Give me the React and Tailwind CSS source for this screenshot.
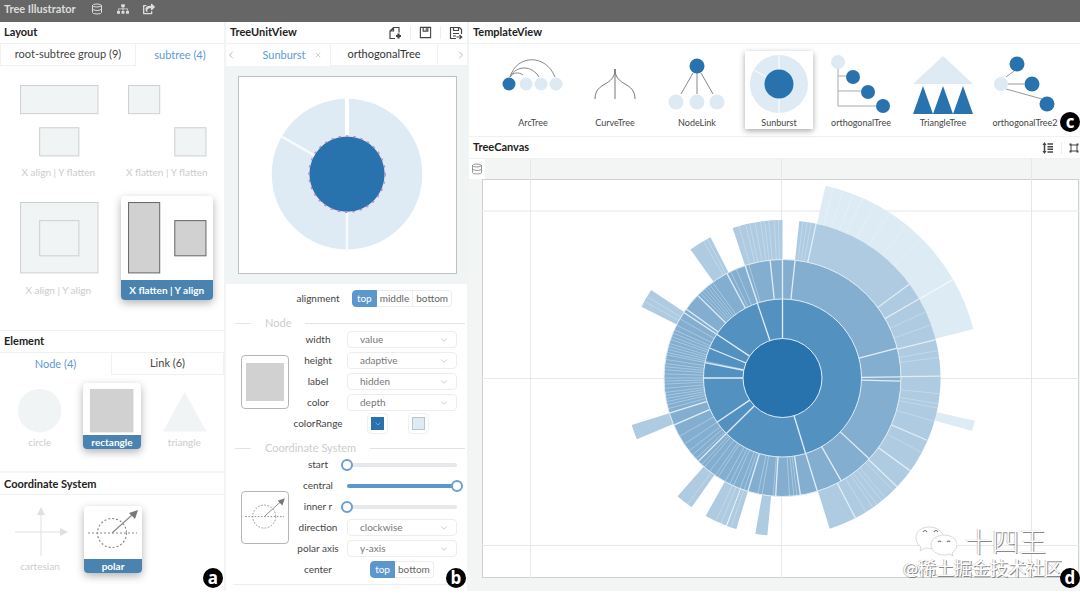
import { ChevronDown, ChevronLeft, ChevronRight, Database, X } from 'lucide-react';
import { FaShareSquare, FaSitemap } from 'react-icons/fa';

const polar = (cx, cy, r, deg) => {
  const a = ((deg - 90) * Math.PI) / 180;
  return `${(cx + r * Math.cos(a)).toFixed(2)} ${(cy + r * Math.sin(a)).toFixed(2)}`;
};

const slice = (cx, cy, r0, r1, from, to) => {
  const large = to - from > 180 ? 1 : 0;
  return `M${polar(cx, cy, r1, from)}A${r1} ${r1} 0 ${large} 1 ${polar(cx, cy, r1, to)}L${polar(cx, cy, r0, to)}A${r0} ${r0} 0 ${large} 0 ${polar(cx, cy, r0, from)}Z`;
};

// every ring holds blocks of [start, end, inner separators, thin separators]
const rings = [
  {
    r0: 39.5,
    r1: 79,
    fill: '#5391c0',
    blocks: [[0, 360, [0, 163, 225.3, 236, 270, 281.3, 292.3, 303.6, 341.4], [282.3]]],
  },
  {
    r0: 79,
    r1: 118.5,
    fill: '#83aed0',
    blocks: [
      [
        0,
        360,
        [0, 6.1, 75.4, 89.5, 91.5, 133, 150.3, 162.9, 171.3, 183.3, 197, 225.3, 246.6, 252.8, 303.6, 305.6, 314.2, 332, 341.6, 354],
        [
          173, 174.5, 176.6, 184.5, 190, 192, 199, 201, 204.5, 206.5, 209, 213, 214.6, 218, 221.3, 223, 227, 229.5,
          232, 236, 240.5, 255, 257, 258.5, 260, 261.5, 263, 265, 267, 268.5, 270, 272, 274, 275.5, 277, 279, 281.3,
          282.5, 284, 285.5, 287, 289, 290.5, 292.3, 294, 296.5, 300, 316, 317.5, 319, 320.5, 322, 323.8, 334, 337, 343.5,
        ],
      ],
    ],
  },
  {
    r0: 118.5,
    r1: 158,
    fill: '#aecbe1',
    blocks: [
      [6.1, 162.6, [12.3, 53.5, 59.9, 75.9, 89.3, 113.3, 126, 133.5, 152.5], [7.5, 9, 10.5, 65.2, 70.3, 80, 82.5, 95.7, 99.4, 101, 105.9, 118.2, 135.5, 139.3, 141, 143.3, 145, 148]],
      [185.5, 189.9, [], []],
      [197, 200.6, [], [199]],
      [200.9, 209.1, [], [203, 205]],
      [215.1, 221.6, [], [217]],
      [247.2, 252.7, [], []],
      [296.8, 303.8, [], [299, 301]],
      [324.4, 332.9, [], [330, 331.5]],
      [341.6, 360, [], [344, 346.5, 348, 350, 352, 353.5, 355, 357, 358.5]],
    ],
  },
  {
    r0: 158,
    r1: 197,
    fill: '#ddebf4',
    blocks: [
      [12.6, 75.6, [60], [15, 18, 21, 24, 28, 33, 39, 45]],
      [102.5, 105.6, [], []],
    ],
  },
];

function TreeSunburst({ cx, cy }) {
  return (
    <g>
      {[...rings].reverse().map((ring) =>
        ring.blocks.map(([from, to, lines, thin]) => (
          <g key={`${ring.r0}-${from}`} stroke={ring.r1 > 158 ? '#f4f9fc' : '#e1edf5'}>
            {to - from === 360 ? (
              <circle cx={cx} cy={cy} r={ring.r1} fill={ring.fill} />
            ) : (
              <path d={slice(cx, cy, ring.r0, ring.r1, from, to)} fill={ring.fill} stroke="none" />
            )}
            {thin.map((a) => (
              <path key={a} d={`M${polar(cx, cy, ring.r0, a)}L${polar(cx, cy, ring.r1, a)}`} strokeWidth="0.6" opacity="0.7" />
            ))}
            {lines.map((a) => (
              <path key={a} d={`M${polar(cx, cy, ring.r0, a)}L${polar(cx, cy, ring.r1, a)}`} strokeWidth="1.3" />
            ))}
          </g>
        ))
      )}
      <circle cx={cx} cy={cy} r="39.5" fill="#2873ae" stroke="#e1edf5" />
    </g>
  );
}

function PolarGlyph() {
  return (
    <g fill="none" stroke="#8a8a8a" strokeWidth="1.2">
      <circle cx="28" cy="27" r="14.5" strokeDasharray="2 2" />
      <path d="M4 27h49" strokeDasharray="2 2" />
      <path d="M28 27L48 9" />
      <path d="M54 4l-3 9-6-6z" fill="#777" stroke="none" />
    </g>
  );
}

const layouts = [
  { id: 'X align | Y flatten', rects: [[8, 6, 77, 28], [27, 48, 39, 28]] },
  { id: 'X flatten | Y flatten', rects: [[7, 6, 31, 28], [53, 48, 31, 28]] },
  { id: 'X align | Y align', rects: [[8, 6, 77, 70], [27, 24, 39, 35]] },
  { id: 'X flatten | Y align', rects: [[7, 6, 31, 70], [53, 24, 31, 35]], active: true },
];

const nodes = [
  { id: 'circle', shape: <circle cx="29" cy="28" r="22" fill="#f1f4f4" /> },
  { id: 'rectangle', shape: <rect x="7" y="6" width="44" height="44" fill="#d1d1d1" />, active: true },
  { id: 'triangle', shape: <path d="M29 9l22 40H7z" fill="#f1f4f4" /> },
];

const systems = [
  {
    id: 'cartesian',
    shape: (
      <g fill="#dfe1e1" stroke="#dfe1e1">
        <path d="M4 26h46M30 50V8" />
        <path d="M30 1l4 8h-8zM57 26l-8-4v8z" stroke="none" />
      </g>
    ),
  },
  { id: 'polar', shape: <PolarGlyph />, active: true },
];

const templates = [
  {
    id: 'ArcTree',
    shape: (
      <>
        <path d="M11 26C18 3 47 3 56 26M11 26c6-12 22-12 29 0M11 26c3-5 9-5 13-2" fill="none" stroke="#888" />
        <circle cx="10" cy="33" r="6.5" fill="#2873ae" />
        {[27, 42, 57].map((x) => <circle key={x} cx={x} cy="33" r="6.5" fill="#dde9f3" />)}
      </>
    ),
  },
  {
    id: 'CurveTree',
    shape: <path d="M34 18v30M34 18C34 36 14 30 14 48M34 18C34 36 54 30 54 48" fill="none" stroke="#777" />,
  },
  {
    id: 'NodeLink',
    shape: (
      <>
        <path d="M30 22L18 43M34 22v21M38 22l12 21" stroke="#888" />
        <circle cx="34" cy="15" r="7.5" fill="#2873ae" />
        {[13, 34, 54].map((x) => <circle key={x} cx={x} cy="51" r="7.5" fill="#dde9f3" />)}
      </>
    ),
  },
  {
    id: 'Sunburst',
    active: true,
    shape: (
      <>
        <circle cx="34" cy="33" r="29" fill="#deebf4" />
        <path d="M34 4v58M9 19l16 9" stroke="#fff" />
        <circle cx="34" cy="33" r="14.5" fill="#2873ae" />
      </>
    ),
  },
  {
    id: 'orthogonalTree',
    shape: (
      <>
        <path d="M11 11v44h38M11 40h24M11 25h9" fill="none" stroke="#aaa" />
        <circle cx="11" cy="11" r="7" fill="#dde9f3" />
        <circle cx="26" cy="26" r="7" fill="#2873ae" />
        <circle cx="41" cy="41" r="7" fill="#2873ae" />
        <circle cx="56" cy="55" r="7" fill="#2873ae" />
      </>
    ),
  },
  {
    id: 'TriangleTree',
    shape: (
      <>
        <path d="M34 5l30 28H4z" fill="#deebf4" />
        <path d="M14 35l10 28H4zM34 35l10 28H24zM54 35l10 28H44z" fill="#2873ae" />
      </>
    ),
  },
  {
    id: 'orthogonalTree2',
    shape: (
      <>
        <path d="M15 26l8-6M17 33h16M15 38l36 10" stroke="#999" />
        <circle cx="10" cy="33" r="7" fill="#dde9f3" />
        <circle cx="26" cy="13" r="7.5" fill="#2873ae" />
        <circle cx="41" cy="33" r="7.5" fill="#2873ae" />
        <circle cx="56" cy="53" r="7.5" fill="#2873ae" />
      </>
    ),
  },
];

function Heading({ children, extra }) {
  return (
    <div className="flex h-[22px] items-center justify-between border-b border-[#f0f1f1] pl-1">
      <h2 className="text-[11px] font-bold text-[#222]">{children}</h2>
      {extra}
    </div>
  );
}

function Tabs({ items, active }) {
  return (
    <div className="flex h-[22px] text-[11px]">
      {items.map((item) => (
        <button
          key={item.name}
          className={
            item.name === active
              ? `${item.width} text-[#5c9ad4]`
              : `${item.width} border border-t-0 border-[#f0f1f1] text-[#444]`
          }
        >
          {item.name}
        </button>
      ))}
    </div>
  );
}

function ThumbCard({ item }) {
  return (
    <button
      className={
        item.active
          ? 'w-[58px] overflow-hidden rounded-sm bg-white shadow-[0_3px_8px_rgba(0,0,0,0.3)]'
          : 'w-[58px]'
      }
    >
      <svg viewBox="0 0 58 53" className="block w-full">
        {item.shape}
      </svg>
      <span
        className={
          item.active
            ? 'block bg-[#4a83b0] text-[10px] leading-[14px] font-bold text-white'
            : 'block text-[10px] leading-[14px] text-[#ccc]'
        }
      >
        {item.id}
      </span>
    </button>
  );
}

function Badge({ children, place }) {
  return (
    <span
      className={`absolute ${place} flex size-5 items-center justify-center rounded-full bg-black pb-px font-['Open_Sans',sans-serif] text-[17px] leading-5 font-bold text-white`}
    >
      {children}
    </span>
  );
}

function LayoutPanel() {
  return (
    <aside className="relative min-w-0 border-r-2 border-[#f1f4f4]">
      <Heading>Layout</Heading>
      <Tabs
        active="subtree (4)"
        items={[
          { name: 'root-subtree group (9)', width: 'w-[136px]' },
          { name: 'subtree (4)', width: 'flex-1' },
        ]}
      />
      <div className="grid grid-cols-2 gap-x-4 gap-y-[14px] pt-[13px] pr-[11px] pb-[30px] pl-3">
        {layouts.map((item) => (
          <button
            key={item.id}
            className={item.active ? 'overflow-hidden rounded-sm shadow-[0_3px_8px_rgba(0,0,0,0.3)]' : ''}
          >
            <svg viewBox="0 0 92 83" className="block w-full">
              {item.rects.map(([x, y, w, h]) => (
                <rect
                  key={y}
                  x={x + 0.5}
                  y={y + 0.5}
                  width={w}
                  height={h}
                  fill={item.active ? '#d1d1d1' : '#f1f4f4'}
                  stroke={item.active ? '#666' : '#cdd0d0'}
                />
              ))}
            </svg>
            <span
              className={
                item.active
                  ? 'block bg-[#4a83b0] text-[10px] leading-5 font-bold whitespace-nowrap text-white'
                  : 'block text-[10px] leading-5 whitespace-nowrap text-[#ccc]'
              }
            >
              {item.id}
            </span>
          </button>
        ))}
      </div>
      <div className="border-t border-[#f0f1f1]">
        <Heading>Element</Heading>
      </div>
      <Tabs
        active="Node (4)"
        items={[
          { name: 'Node (4)', width: 'w-[111px]' },
          { name: 'Link (6)', width: 'flex-1' },
        ]}
      />
      <div className="flex gap-[15px] px-[11px] pt-2 pb-[22px]">
        {nodes.map((item) => <ThumbCard key={item.id} item={item} />)}
      </div>
      <div className="border-t-2 border-[#f4f5f5]">
        <Heading>Coordinate System</Heading>
      </div>
      <div className="flex gap-[15px] px-[11px] pt-[11px]">
        {systems.map((item) => <ThumbCard key={item.id} item={item} />)}
      </div>
      <Badge place="right-px bottom-[3px]">a</Badge>
    </aside>
  );
}

function Row({ label, id, children }) {
  return (
    <div className="flex h-[17px] items-center">
      <label htmlFor={id} className="w-[58px] text-center text-[10px] text-[#444]">
        {label}
      </label>
      <div className="min-w-0 flex-1">{children}</div>
    </div>
  );
}

function SelectRow({ label, value }) {
  const id = label.replace(' ', '-');
  return (
    <Row label={label} id={id}>
      <div className="relative">
        <select
          id={id}
          defaultValue={value}
          className="block h-[17px] w-full appearance-none rounded-sm border border-[#eceded] bg-white pl-3 text-[10px] leading-[15px] text-[#777]"
        >
          <option>{value}</option>
        </select>
        <ChevronDown className="pointer-events-none absolute top-1 right-2 size-2.5 text-[#c4c4c4]" />
      </div>
    </Row>
  );
}

function SliderRow({ label, value }) {
  const id = label.replace(' ', '-');
  return (
    <Row label={label} id={id}>
      <div className={value ? 'flex h-1 items-center rounded-full bg-[#5b97cd]' : 'flex h-1 items-center rounded-full bg-[#e6e8eb]'}>
        <input
          id={id}
          type="range"
          defaultValue={value}
          className="-mx-1.5 h-3 min-w-0 flex-1 appearance-none bg-transparent [&::-webkit-slider-thumb]:size-3 [&::-webkit-slider-thumb]:appearance-none [&::-webkit-slider-thumb]:rounded-full [&::-webkit-slider-thumb]:border-2 [&::-webkit-slider-thumb]:border-[#6a9fd2] [&::-webkit-slider-thumb]:bg-white"
        />
      </div>
    </Row>
  );
}

function Segmented({ items }) {
  return (
    <div className="flex justify-center text-[10px] leading-[15px]">
      {items.map((item, i) => (
        <button
          key={item}
          className={
            i === 0
              ? 'rounded-l-sm border border-[#5b97cd] bg-[#5b97cd] px-1 text-white'
              : 'border border-l-0 border-[#eceded] px-[3px] text-[#666] last:rounded-r-sm'
          }
        >
          {item}
        </button>
      ))}
    </div>
  );
}

function Legend({ children }) {
  return (
    <div className="mt-2 flex h-4 items-center text-[11px] text-[#ccc]">
      <span className="-ml-1.5 h-px w-4 bg-[#e2e2e2]" />
      <h3 className="mx-[14px]">{children}</h3>
      <span className="-mr-2 h-px flex-1 bg-[#e2e2e2]" />
    </div>
  );
}

function UnitPanel() {
  return (
    <section className="relative min-w-0 border-r-2 border-[#f1f4f4]">
      <Heading
        extra={
          <div className="flex items-center divide-x divide-[#eee] pr-1 text-[#444]">
            <button aria-label="New unit" className="px-2">
              <svg viewBox="0 0 14 14" className="size-[14px]" fill="none" stroke="currentColor" strokeWidth="1.2">
                <path d="M7 12.500H2V5l3.500-3.500H11v5M5.500 1.500V5H2" />
                <path d="M10.500 7.500v5M8 10h5" strokeWidth="2.2" />
              </svg>
            </button>
            <button aria-label="Save" className="px-2">
              <svg viewBox="0 0 14 14" className="size-[13px]" fill="none" stroke="currentColor" strokeWidth="1.2">
                <path d="M1.500 1.500h11v11h-11zM4.500 1.500v4h5v-4M7.800 2.500v2" />
              </svg>
            </button>
            <button aria-label="Save as" className="pl-2">
              <svg viewBox="0 0 14 14" className="size-[14px]" fill="none" stroke="currentColor" strokeWidth="1.2">
                <path d="M7 12.500H1.500v-11h9l2 2V8M4.500 1.500v3h5v-3M4 7.500h6M4 10h3M7.500 11h5M10.500 9l2.200 2-2.200 2" />
              </svg>
            </button>
          </div>
        }
      >
        TreeUnitView
      </Heading>
      <div className="flex h-[22px] items-center text-[11px]">
        <button aria-label="Previous tab" className="w-3 text-[#bbb]">
          <ChevronLeft className="-ml-px size-3" />
        </button>
        <button className="flex h-full flex-1 items-center justify-center gap-2 border-r border-[#f0f1f1] pl-4 text-[#5c9ad4]">
          Sunburst
          <X className="size-2 text-[#bbb]" />
        </button>
        <button className="h-full w-[107px] border-r border-b border-[#f0f1f1] text-[#333]">orthogonalTree</button>
        <button aria-label="Next tab" className="flex h-full w-[29px] items-center justify-end border-b border-[#f0f1f1] text-[#bbb]">
          <ChevronRight className="size-3" />
        </button>
      </div>

      <div className="bg-[#f1f4f4] py-2.5 pr-[10px] pl-3">
        <svg viewBox="0 0 219 198" className="block w-full border border-[#bfc1c1] bg-white">
          <circle cx="109" cy="98" r="76" fill="#deebf4" />
          <path d="M109 98V20" stroke="#fff" strokeWidth="4" />
          <path d="M109 98v78" stroke="#f8fbfd" strokeWidth="2.5" />
          <path d="M109 98L43 60" stroke="#f8fbfd" strokeWidth="2.5" />
          <circle cx="109" cy="98" r="38" fill="#2873ae" />
          <circle cx="109" cy="98" r="38.5" fill="none" stroke="#c78bc8" strokeWidth="1.5" strokeDasharray="2.5 5" />
        </svg>
      </div>

      <div className="pt-1.5 pr-[10px] pl-[15px]">
        <div className="pl-12">
          <Row label="alignment">
            <Segmented items={['top', 'middle', 'bottom']} />
          </Row>
        </div>
        <Legend>Node</Legend>
        <div className="flex items-center">
          <div className="w-12 rounded border border-[#b5b5b5] px-1 py-[7px]">
            <div className="h-[38px] bg-[#d1d1d1]" />
          </div>
          <div className="flex min-w-0 flex-1 flex-col gap-1">
            <SelectRow label="width" value="value" />
            <SelectRow label="height" value="adaptive" />
            <SelectRow label="label" value="hidden" />
            <SelectRow label="color" value="depth" />
            <Row label="colorRange">
              <div className="flex gap-5 pl-5">
                <button aria-label="Range start" className="rounded-sm border border-[#f0f0f0] p-[3px]">
                  <span className="flex size-[13px] items-center justify-center bg-[#2873ae]">
                    <ChevronDown className="size-2 text-[#9fc3e0]" />
                  </span>
                </button>
                <button aria-label="Range end" className="rounded-sm border border-[#f0f0f0] p-[3px]">
                  <span className="block size-[13px] border border-[#b9c3ca] bg-[#deebf4]" />
                </button>
              </div>
            </Row>
          </div>
        </div>
        <Legend>Coordinate System</Legend>
        <div className="flex items-center">
          <div className="w-12 rounded border border-[#b5b5b5]">
            <svg viewBox="0 0 58 64" className="block w-full">
              <g transform="translate(0 4)">
                <PolarGlyph />
              </g>
            </svg>
          </div>
          <div className="flex min-w-0 flex-1 flex-col gap-1">
            <SliderRow label="start" value={0} />
            <SliderRow label="central" value={100} />
            <SliderRow label="inner r" value={0} />
            <SelectRow label="direction" value="clockwise" />
            <SelectRow label="polar axis" value="y-axis" />
            <Row label="center">
              <Segmented items={['top', 'bottom']} />
            </Row>
          </div>
        </div>
        <div className="mt-1.5 -ml-2 border-t border-[#eee]" />
      </div>
      <Badge place="right-px bottom-[3px]">b</Badge>
    </section>
  );
}

function CanvasPanel() {
  return (
    <section className="relative min-w-0">
      <Heading>TemplateView</Heading>
      <div className="relative flex gap-[14px] border-b border-[#f0f1f1] pt-[7px] pb-[7px] pl-[30px]">
        {templates.map((item) => (
          <button
            key={item.id}
            className={
              item.active
                ? 'flex w-[68px] shrink-0 flex-col items-center bg-white shadow-[0_2px_6px_rgba(0,0,0,0.35)]'
                : 'flex w-[68px] shrink-0 flex-col items-center'
            }
          >
            <svg viewBox="0 0 68 66" className="block w-full">
              {item.shape}
            </svg>
            <span className="text-[9px] leading-3 text-[#444]">{item.id}</span>
          </button>
        ))}
        <Badge place="right-0 bottom-1">c</Badge>
      </div>
      <Heading
        extra={
          <div className="flex items-center divide-x divide-[#eee] text-[#444]">
            <button aria-label="Line spacing" className="pr-[7px]">
              <svg viewBox="0 0 12 12" className="size-3" fill="none" stroke="currentColor" strokeWidth="1.5">
                <path d="M5.500 2H11M5.500 4.700H11M5.500 7.300H11M5.500 10H11M2.500 2v8" />
                <path d="M2.500 0l2 3h-4zM2.500 12l2-3h-4z" fill="currentColor" stroke="none" />
              </svg>
            </button>
            <button aria-label="Fit frame" className="pr-px pl-[7px]">
              <svg viewBox="0 0 10 10" className="size-2.5" fill="currentColor" stroke="currentColor">
                <path d="M2 2h6v6H2z" fill="none" />
                <path d="M.5.500h2v2h-2zM7.500.500h2v2h-2zM.5 7.500h2v2h-2zM7.500 7.500h2v2h-2z" stroke="none" />
              </svg>
            </button>
          </div>
        }
      >
        TreeCanvas
      </Heading>
      <div className="relative">
        <svg viewBox="469 158 611 432" className="block w-full bg-[#f3f5f5]">
          <rect x="482.5" y="178.5" width="596" height="398" fill="#fff" stroke="#cfd1d1" />
          <path d="M530.500 158v419M781.500 158v419M1031.500 158v419M482 210h597M482 377.500h597M482 544.500h597" stroke="#e6e7e7" />
          <TreeSunburst cx={782.5} cy={377} />
        </svg>
        <button aria-label="Data" className="absolute top-0 left-0 flex h-5 w-4 items-center justify-center bg-white text-[#777]">
          <Database className="size-3" strokeWidth={1.5} />
        </button>
        <div className="absolute right-[18px] bottom-[13px] flex flex-col items-end font-['Lato','Noto_Sans_CJK_SC',sans-serif] text-white [text-shadow:1px_1px_0_#888,-1px_0_0_#ccc]">
          <div className="flex items-center gap-2 pr-4 text-[27px] leading-7 font-light">
            <svg viewBox="0 0 42 32" className="h-8 w-[42px]" fill="#fff" stroke="#cfcfcf" strokeWidth="0.8">
              <path d="M14 1C6 1 1 6 1 12c0 4 2 7 5 9l-1 4 5-3c10 2 18-3 18-10S22 1 14 1z" />
              <path d="M29 9c-7 0-13 4-13 10s6 10 13 10c2 0 3 0 5-1l4 2-1-3c3-2 5-5 5-8 0-6-6-10-13-10z" />
              <path d="M8 6q2-3 4 0M19 6q2-3 4 0M23 16q2-2 3 0M32 16q2-2 3 0" fill="none" stroke="#777" strokeWidth="1.2" />
            </svg>
            十四王
          </div>
          <div className="text-[18px] leading-5">@稀土掘金技术社区</div>
        </div>
      </div>
      <Badge place="right-0 bottom-[3px]">d</Badge>
    </section>
  );
}

export default function App() {
  return (
    <div className="min-h-screen bg-white font-['Lato','Liberation_Sans',sans-serif]">
      <header className="flex h-[22px] items-center gap-[15px] bg-[#666] pb-1 pl-1 text-[#ddd]">
        <h1 className="text-[11px] font-bold">Tree Illustrator</h1>
        <nav className="flex items-center gap-[14px]">
          <button aria-label="Data"><Database className="size-3" /></button>
          <button aria-label="Tree"><FaSitemap className="size-3" /></button>
          <button aria-label="Share"><FaShareSquare className="size-3" /></button>
        </nav>
      </header>
      <main className="grid grid-cols-[226fr_243fr_611fr]">
        <LayoutPanel />
        <UnitPanel />
        <CanvasPanel />
      </main>
    </div>
  );
}
